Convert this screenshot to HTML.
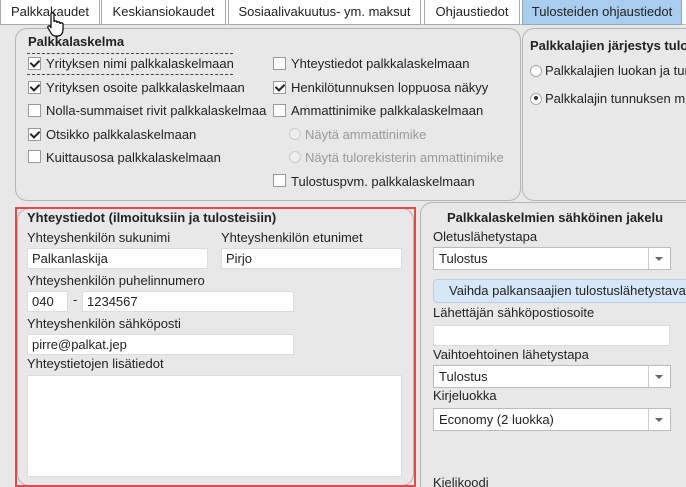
<!DOCTYPE html>
<html style="overflow:hidden;width:686px;height:487px"><head><style>
*{box-sizing:border-box;margin:0;padding:0}
body{width:686px;height:487px;overflow:hidden;background:#e8e8e8;font-family:"Liberation Sans",Arial,sans-serif;font-size:13px;color:#222;position:relative}
.a{position:absolute;white-space:nowrap}
.tabbar{position:absolute;left:0;top:0;width:686px;height:25px;background:#fff;border-bottom:1px solid #bbb}
.tab{position:absolute;top:0;height:25px;border:1px solid #aaa;border-top:none;background:#fff;text-align:center;line-height:23px;font-size:13px}
.panel{position:absolute;border:1px solid #b5b5b5;border-radius:12px;background:#e8e8e8}
.cb{position:absolute;width:13px;height:13px;border:1px solid #999;background:#fff}
.cb.c::after{content:"";position:absolute;left:3px;top:0px;width:4px;height:7px;border:solid #222;border-width:0 2px 2px 0;transform:rotate(45deg)}
.rd{position:absolute;width:12px;height:12px;border:1px solid #aaa;border-radius:50%;background:#fff}
.inp{position:absolute;background:#fff;border:1px solid #ddd;height:21px;line-height:19px;padding-left:4px;font-size:13px}
.sel{position:absolute;background:#fff;border:1px solid #bbb;height:23px;line-height:21px;padding-left:5px}
.sel::after{content:"";position:absolute;right:0;top:0;width:21px;height:21px;border-left:1px solid #ccc;background:#fff}
.sel b{position:absolute;right:7px;top:9px;width:0;height:0;border-left:4px solid transparent;border-right:4px solid transparent;border-top:4px solid #666;z-index:2}
.dis{color:#999}
</style></head><body>
<div class="tabbar"></div>
<div class="tab" style="left:0;width:100px">Palkkakaudet</div>
<div class="tab" style="left:101px;width:125px">Keskiansiokaudet</div>
<div class="tab" style="left:228px;width:193px">Sosiaalivakuutus- ym. maksut</div>
<div class="tab" style="left:424px;width:96px">Ohjaustiedot</div>
<div class="tab" style="left:522px;width:160px;background:#a8cdee;border-color:#8ab">Tulosteiden ohjaustiedot</div>

<div class="panel" style="left:15px;top:28px;width:506px;height:173px"></div>
<div class="a" style="left:28px;top:34px;font-weight:bold">Palkkalaskelma</div>
<div class="a" style="left:27px;top:53px;width:206px;height:22px;border-top:1px dashed #444;border-bottom:1px dashed #444"></div>
<div class="cb c" style="left:28px;top:57px"></div><div class="a" style="left:46px;top:56px">Yrityksen nimi palkkalaskelmaan</div>
<div class="cb c" style="left:28px;top:81px"></div><div class="a" style="left:46px;top:80px">Yrityksen osoite palkkalaskelmaan</div>
<div class="cb" style="left:28px;top:104px"></div><div class="a" style="left:46px;top:103px">Nolla-summaiset rivit palkkalaskelmaa</div>
<div class="cb c" style="left:28px;top:128px"></div><div class="a" style="left:46px;top:127px">Otsikko palkkalaskelmaan</div>
<div class="cb" style="left:28px;top:150px"></div><div class="a" style="left:46px;top:150px">Kuittausosa palkkalaskelmaan</div>

<div class="cb" style="left:273px;top:57px"></div><div class="a" style="left:291px;top:56px">Yhteystiedot palkkalaskelmaan</div>
<div class="cb c" style="left:273px;top:81px"></div><div class="a" style="left:291px;top:80px">Henkilötunnuksen loppuosa näkyy</div>
<div class="cb" style="left:273px;top:104px"></div><div class="a" style="left:291px;top:103px">Ammattinimike palkkalaskelmaan</div>
<div class="rd" style="left:289px;top:128px;border-color:#ccc;background:#eee"></div><div class="a dis" style="left:305px;top:127px">Näytä ammattinimike</div>
<div class="rd" style="left:289px;top:151px;border-color:#ccc;background:#eee"></div><div class="a dis" style="left:305px;top:150px">Näytä tulorekisterin ammattinimike</div>
<div class="cb" style="left:273px;top:174px"></div><div class="a" style="left:291px;top:174px">Tulostuspvm. palkkalaskelmaan</div>

<div class="panel" style="left:522px;top:28px;width:180px;height:173px"></div>
<div class="a" style="left:530px;top:38px;font-weight:bold">Palkkalajien järjestys tulo</div>
<div class="rd" style="left:530px;top:65px"></div><div class="a" style="left:545px;top:63px">Palkkalajien luokan ja tun</div>
<div class="rd" style="left:530px;top:93px"></div><div class="a" style="left:534px;top:96px;width:4px;height:4px;border-radius:50%;background:#333"></div><div class="a" style="left:545px;top:91px">Palkkalajin tunnuksen mu</div>

<div class="panel" style="left:17px;top:208px;width:397px;height:278px"></div>
<div class="a" style="left:15px;top:207px;width:401px;height:280px;border:2px solid #e84848"></div>
<div class="a" style="left:27px;top:210px;font-weight:bold">Yhteystiedot (ilmoituksiin ja tulosteisiin)</div>
<div class="a" style="left:27px;top:230px">Yhteyshenkilön sukunimi</div>
<div class="a" style="left:221px;top:230px">Yhteyshenkilön etunimet</div>
<div class="inp" style="left:27px;top:248px;width:181px">Palkanlaskija</div>
<div class="inp" style="left:221px;top:248px;width:181px">Pirjo</div>
<div class="a" style="left:27px;top:273px">Yhteyshenkilön puhelinnumero</div>
<div class="inp" style="left:27px;top:291px;width:41px">040</div>
<div class="a" style="left:73px;top:292px">-</div>
<div class="inp" style="left:82px;top:291px;width:212px">1234567</div>
<div class="a" style="left:27px;top:316px">Yhteyshenkilön sähköposti</div>
<div class="inp" style="left:27px;top:334px;width:267px">pirre@palkat.jep</div>
<div class="a" style="left:27px;top:356px">Yhteystietojen lisätiedot</div>
<div class="inp" style="left:27px;top:375px;width:375px;height:102px"></div>

<div class="panel" style="left:420px;top:202px;width:290px;height:300px"></div>
<div class="a" style="left:447px;top:210px;font-weight:bold">Palkkalaskelmien sähköinen jakelu</div>
<div class="a" style="left:433px;top:229px">Oletuslähetystapa</div>
<div class="sel" style="left:433px;top:247px;width:238px">Tulostus<b></b></div>
<div class="a" style="left:433px;top:279px;width:260px;height:24px;background:#d6e8f8;border:1px solid #b8cfe6;border-radius:4px;line-height:22px;padding-left:15px">Vaihda palkansaajien tulostuslähetystavat</div>
<div class="a" style="left:433px;top:305px">Lähettäjän sähköpostiosoite</div>
<div class="inp" style="left:433px;top:325px;width:237px"></div>
<div class="a" style="left:433px;top:347px">Vaihtoehtoinen lähetystapa</div>
<div class="sel" style="left:433px;top:365px;width:238px">Tulostus<b></b></div>
<div class="a" style="left:433px;top:388px">Kirjeluokka</div>
<div class="sel" style="left:433px;top:408px;width:238px">Economy (2 luokka)<b></b></div>
<div class="a" style="left:433px;top:475px">Kielikoodi</div>

<svg class="a" style="left:46px;top:12px" width="22" height="26" viewBox="0 0 22 26"><path d="M5 2c0-1.5 3-1.5 3 0v8c0-1.5 3-1.5 3 0v1c0-1.5 3-1.5 3 0v1c0-1.5 3-1.5 3 0v6c0 3-2 6-5 6h-3c-2 0-3-1-4-3l-3-5c-1-1.5 1-3 2.5-1.5L5 16z" fill="#fff" stroke="#000" stroke-width="1.2"/></svg>
</body></html>
